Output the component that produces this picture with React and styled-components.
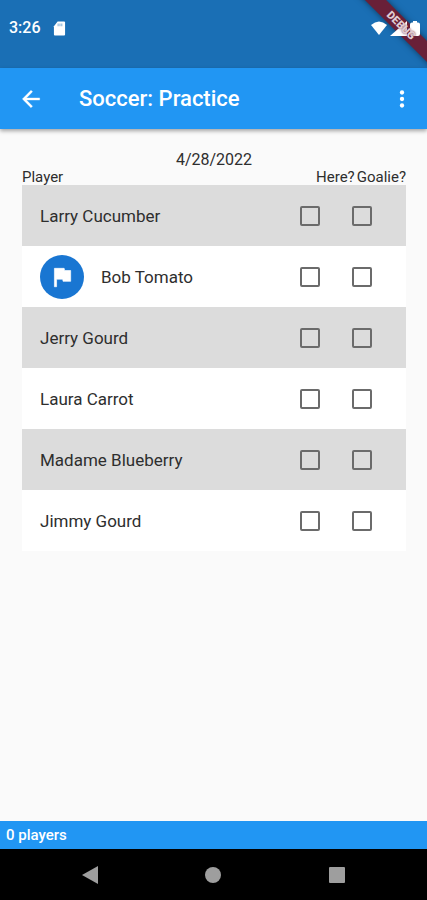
import styled, { createGlobalStyle, css } from "styled-components";

const GlobalStyle = createGlobalStyle`
  * {
    box-sizing: border-box;
  }

  body {
    margin: 0;
    background-color: #fafafa;
    color: #2e2e2e;
    font-family: Roboto, "Liberation Sans", sans-serif;
  }
`;

const Screen = styled.div`
  position: relative;
  display: flex;
  flex-direction: column;
  min-height: 100vh;
  overflow: hidden;
`;

const StatusBar = styled.div`
  display: flex;
  align-items: flex-start;
  justify-content: space-between;
  height: 68px;
  padding: 19px 7px 0 9px;
  background-color: #1a6fb5;
  color: white;
`;

const StatusGroup = styled.div`
  z-index: 2;
  display: flex;
  align-items: center;
  gap: ${({ $gap }) => $gap}px;
  height: 18px;
`;

const Clock = styled.span`
  font-size: 16px;
  font-weight: 500;
  line-height: 18px;
`;

const bannerPlace = css`
  position: absolute;
  top: 18px;
  right: -34px;
  width: 120px;
  height: 15px;
  transform: rotate(45deg);
`;

/* the status icons sit between the ribbon and its label */
const DebugRibbon = styled.div`
  ${bannerPlace}
  z-index: 1;
  background-color: #692038;
  box-shadow: 0 0 6px rgba(0, 0, 0, 0.5);
`;

const DebugLabel = styled.div`
  ${bannerPlace}
  z-index: 3;
  color: #e0cdd4;
  font-size: 11px;
  font-weight: 900;
  line-height: 15px;
  text-align: center;
  text-shadow: 0 0 2px #692038;
`;

const AppBar = styled.header`
  display: flex;
  align-items: center;
  height: 61px;
  padding: 0 12px 0 18px;
  background-color: #2196f3;
  box-shadow: 0 2px 4px rgba(0, 0, 0, 0.35);
  color: white;
`;

const IconButton = styled.button`
  display: flex;
  padding: 0;
  border: none;
  background-color: transparent;
  color: inherit;
  cursor: pointer;
`;

const Title = styled.h1`
  flex: 1;
  margin: 0 0 0 35px;
  font-size: 22px;
  font-weight: 500;
  line-height: 26px;
`;

const Content = styled.main`
  flex: 1;
  padding: 22px 21px 22px 22px;
`;

const PracticeDate = styled.p`
  margin: 0;
  font-size: 16px;
  line-height: 18px;
  text-align: center;
`;

const Roster = styled.table`
  display: block;
  width: 100%;
`;

const RosterHead = styled.thead`
  display: block;
`;

const RosterBody = styled.tbody`
  display: block;
`;

const HeadRow = styled.tr`
  display: flex;
  gap: 2px;
  height: 16px;
`;

const HeadCell = styled.th`
  flex: ${({ $grow }) => ($grow ? 1 : "none")};
  padding: 0;
  font-size: 15px;
  font-weight: 400;
  line-height: 16px;
  text-align: left;
`;

const PlayerRow = styled.tr`
  display: flex;
  align-items: center;
  gap: 32px;
  height: 61px;
  padding: 0 34px 0 18px;
  background-color: white;

  &:nth-child(odd) {
    background-color: #dcdcdc;
  }
`;

const NameCell = styled.td`
  display: flex;
  flex: 1;
  align-items: center;
  gap: 17px;
  padding: 0;
  font-size: 17px;
  line-height: 22px;
`;

const CheckCell = styled.td`
  display: flex;
  padding: 0;
`;

const Badge = styled.span`
  display: flex;
  align-items: center;
  justify-content: center;
  width: 44px;
  height: 44px;
  border-radius: 50%;
  background-color: #1976d2;
  color: white;
`;

const Checkbox = styled.input`
  appearance: none;
  width: 20px;
  height: 20px;
  margin: 0;
  border: 2px solid #6b6b6b;
  border-radius: 2px;
  cursor: pointer;

  &:checked {
    border-color: #1976d2;
    background-color: #1976d2;
  }
`;

const Footer = styled.footer`
  height: 28px;
  padding: 0 6px;
  background-color: #2196f3;
  color: white;
  font-size: 15px;
  font-weight: 500;
  line-height: 28px;
`;

const NavBar = styled.nav`
  display: flex;
  align-items: center;
  justify-content: space-around;
  height: 51px;
  padding: 0 28px;
  background-color: black;
  color: #9e9e9e;
`;

const players = [
  { id: 1, name: "Larry Cucumber" },
  { id: 2, name: "Bob Tomato", flagged: true },
  { id: 3, name: "Jerry Gourd" },
  { id: 4, name: "Laura Carrot" },
  { id: 5, name: "Madame Blueberry" },
  { id: 6, name: "Jimmy Gourd" },
];

const Icon = ({ size = 24, children }) => (
  <svg width={size} height={size} viewBox="0 0 24 24" fill="currentColor" aria-hidden="true">
    {children}
  </svg>
);

const Player = ({ player }) => (
  <PlayerRow>
    <NameCell>
      {player.flagged && (
        <Badge>
          <Icon size={26}>
            <path d="M14.4 6 14 4H5v17h2v-7h5.6l.4 2h7V6z" stroke="currentColor" strokeWidth="0.6" />
          </Icon>
        </Badge>
      )}
      {player.name}
    </NameCell>
    <CheckCell>
      <Checkbox type="checkbox" aria-label={`${player.name} here`} />
    </CheckCell>
    <CheckCell>
      <Checkbox type="checkbox" aria-label={`${player.name} goalie`} />
    </CheckCell>
  </PlayerRow>
);

const App = () => (
  <Screen>
    <GlobalStyle />

    <StatusBar>
      <StatusGroup $gap={12}>
        <Clock>3:26</Clock>
        <svg width="13" height="15" viewBox="0 0 14 15" aria-hidden="true">
          <path d="M5 0h7q1 0 1 1v13q0 1-1 1H2q-1 0-1-1V5z" fill="white" />
          <path d="M5 2h1v3H5zM7 2h1v3H7zM9 2h1v3H9z" fill="#1a6fb5" opacity="0.6" />
        </svg>
      </StatusGroup>
      <StatusGroup $gap={3}>
        <svg width="16" height="14" viewBox="0 0 16 14" fill="currentColor" aria-hidden="true">
          <path d="M8 14 0 4Q8-3 16 4z" />
        </svg>
        <svg width="17" height="15" viewBox="0 0 17 15" fill="currentColor" aria-hidden="true">
          <path d="M17 0v15H0z" />
        </svg>
        <svg width="10" height="15" viewBox="0 0 10 15" fill="currentColor" aria-hidden="true">
          <path d="M3 0h4v1.500h1q2 0 2 2V13q0 2-2 2H2q-2 0-2-2V3.500q0-2 2-2h1z" />
        </svg>
      </StatusGroup>
    </StatusBar>

    <AppBar>
      <IconButton type="button" aria-label="Back">
        <Icon size={26}>
          <path
            d="M20 11H7.830l5.590-5.590L12 4l-8 8 8 8 1.410-1.410L7.830 13H20z"
            stroke="currentColor"
            strokeWidth="0.3"
          />
        </Icon>
      </IconButton>
      <Title>Soccer: Practice</Title>
      <IconButton type="button" aria-label="More options">
        <Icon size={26}>
          <circle cx="12" cy="6" r="2" />
          <circle cx="12" cy="12" r="2" />
          <circle cx="12" cy="18" r="2" />
        </Icon>
      </IconButton>
    </AppBar>

    <Content>
      <PracticeDate>4/28/2022</PracticeDate>
      <Roster cellSpacing="0">
        <RosterHead>
          <HeadRow>
            <HeadCell $grow>Player</HeadCell>
            <HeadCell>Here?</HeadCell>
            <HeadCell>Goalie?</HeadCell>
          </HeadRow>
        </RosterHead>
        <RosterBody>
          {players.map((player) => (
            <Player key={player.id} player={player} />
          ))}
        </RosterBody>
      </Roster>
    </Content>

    <Footer>0 players</Footer>

    <NavBar>
      <IconButton type="button" aria-label="Back">
        <svg width="18" height="20" viewBox="0 0 18 20" fill="currentColor" aria-hidden="true">
          <path d="M17 1v18L1 10z" />
        </svg>
      </IconButton>
      <IconButton type="button" aria-label="Home">
        <svg width="16" height="16" viewBox="0 0 16 16" fill="currentColor" aria-hidden="true">
          <circle cx="8" cy="8" r="8" />
        </svg>
      </IconButton>
      <IconButton type="button" aria-label="Recent apps">
        <svg width="18" height="18" viewBox="0 0 18 18" fill="currentColor" aria-hidden="true">
          <rect x="1" y="1" width="16" height="16" rx="1" />
        </svg>
      </IconButton>
    </NavBar>

    <DebugRibbon />
    <DebugLabel>DEBUG</DebugLabel>
  </Screen>
);

export default App;
